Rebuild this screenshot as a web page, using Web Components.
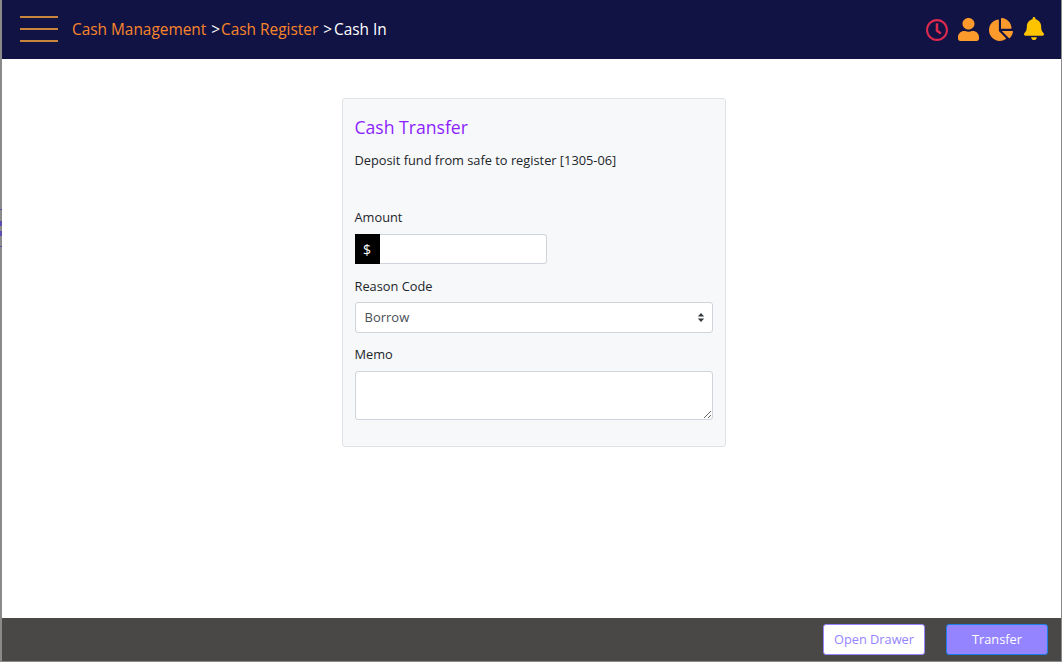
<!DOCTYPE html>
<html lang="en"><head><meta charset="utf-8"><title>Cash In</title>
<style>
html,body{margin:0;height:100%;background:#fff;overflow:hidden}
body{font-family:"Open Sans","Noto Sans",sans-serif;color:#212529}
</style></head>
<body>
<template id="t-app"><style>
:host{display:flex;flex-direction:column;width:1062px;height:662px;box-sizing:border-box;border-left:2px solid #8a8a8a;border-right:1px solid #8a8a8a;border-bottom:1px solid #8a8a8a;position:relative}
main{flex:1;display:flex;justify-content:center;align-items:flex-start;padding:39px 0 0 4px;min-height:0}
.ticks{position:absolute;left:-2px;top:209px;width:2px;height:38px;background:linear-gradient(#5a4fb0 0 1px,transparent 1px 12px,#5a4fb0 12px 17px,transparent 17px 22px,#5a4fb0 22px 27px,transparent 27px 37px,#5a4fb0 37px)}
</style><slot name="top"></slot><main><slot></slot></main><slot name="bottom"></slot><div class="ticks"></div></template>

<template id="t-header"><style>
:host{display:flex;align-items:center;height:59px;background:#111345;box-sizing:border-box;padding:0 17px 0 18px;flex:none}
.burger{display:flex;flex-direction:column;justify-content:space-between;width:38px;height:26px;margin-right:14px;margin-top:-1px}
.burger i{display:block;height:2px;background:#c9853c}
nav{flex:1;font-size:15.4px;color:#fff;white-space:pre;margin-top:-1px}
a{color:#f9852a}
.sep{margin:0 1px 0 5px}
.sep.b{margin:0 2px 0 5px}
.icons{display:flex;align-items:center;gap:10px}
svg{display:block;flex:none}
.clock{margin-top:1px}
.bell{margin:0 0 2px 1px}
</style><div class="burger"><i></i><i></i><i></i></div>
<nav><a>Cash Management</a><span class="sep">&gt;</span><a>Cash Register</a><span class="sep b">&gt;</span>Cash In</nav>
<div class="icons">
<svg class="clock" width="22" height="22" viewBox="8 8 496 496" fill="#dc2a4e"><path d="M256 8C119 8 8 119 8 256s111 248 248 248 248-111 248-248S393 8 256 8zm0 448c-110.5 0-200-89.5-200-200S145.5 56 256 56s200 89.5 200 200-89.5 200-200 200zm61.8-104.4l-84.9-61.7c-3.1-2.3-4.9-5.9-4.9-9.7V116c0-6.6 5.4-12 12-12h32c6.6 0 12 5.4 12 12v141.7l66.8 48.6c5.4 3.9 6.5 11.4 2.6 16.8L334.6 349c-3.9 5.3-11.4 6.5-16.8 2.6z"/></svg>
<svg width="21" height="23" viewBox="0 0 448 512" preserveAspectRatio="none" fill="#fd9a2c"><path d="M224 256c70.7 0 128-57.3 128-128S294.7 0 224 0 96 57.3 96 128s57.3 128 128 128zm89.6 32h-16.7c-22.2 10.2-46.9 16-72.9 16s-50.6-5.8-72.9-16h-16.7C60.2 288 0 348.2 0 422.4V464c0 26.5 21.5 48 48 48h352c26.5 0 48-21.5 48-48v-41.6c0-74.2-60.2-134.4-134.4-134.4z"/></svg>
<svg width="24" height="23" viewBox="0 0 544 512" preserveAspectRatio="none" fill="#fd9a2c"><path d="M527.79 288H290.5l158.03 158.03c6.04 6.04 15.98 6.53 22.19 .68 38.7-36.46 65.32-85.61 73.13-140.86 1.34-9.46-6.51-17.85-16.06-17.85zm-15.83-64.8C503.72 103.74 408.26 8.28 288.8 .04 279.68-.59 272 7.1 272 16.24V240h223.77c9.14 0 16.82-7.68 16.19-16.8zM224 288V50.71c0-9.55-8.39-17.4-17.84-16.06C86.99 51.49-4.1 155.6 .14 280.37 4.5 408.51 114.83 513.59 243.03 511.98c50.4-.63 96.97-16.87 135.26-44.03 7.9-5.6 8.42-17.23 1.57-24.08L224 288z"/></svg>
<svg class="bell" width="20" height="23" viewBox="0 0 448 512" preserveAspectRatio="none" fill="#ffc400"><path d="M224 512c35.32 0 63.97-28.65 63.97-64H160.03c0 35.35 28.65 64 63.97 64zm215.39-149.71c-19.32-20.76-55.47-51.99-55.47-154.29 0-77.7-54.48-139.9-127.94-155.16V32c0-17.67-14.32-32-31.98-32s-31.98 14.33-31.98 32v20.84C118.56 68.1 64.08 130.3 64.08 208c0 102.3-36.15 133.53-55.47 154.29-6 6.45-8.66 14.16-8.61 21.71.11 16.4 12.98 32 32.1 32h383.8c19.12 0 32-15.6 32.1-32 .05-7.55-2.61-15.27-8.61-21.71z"/></svg>
</div></template>

<template id="t-card"><style>
:host{display:block;width:384px;height:349px;box-sizing:border-box;background:#f7f8fa;border:1px solid #dfe2e6;border-radius:3px;padding:12px}
h2{margin:5px 0 0;font-size:17.6px;font-weight:400;line-height:22px;color:#8c1fff}
p{margin:12px 0 0;font-size:12.8px;line-height:20px}
.body{margin-top:38px;display:flex;flex-direction:column}
</style><h2><slot name="title"></slot></h2><p><slot name="sub"></slot></p><div class="body"><slot></slot></div></template>

<template id="t-field"><style>
:host{display:block;margin-bottom:12px}
label{display:block;font-size:12.8px;line-height:18px;margin-bottom:8px;color:#212529}
:host([nudge]) label{padding-top:1px;margin-bottom:7px}
</style><label><slot name="label"></slot></label><slot></slot></template>

<template id="t-money"><style>
:host{display:flex;width:192px;height:30px}
span{width:25px;background:#000;color:#fff;font-size:14px;display:flex;align-items:center;justify-content:center;flex:none}
input{flex:1;min-width:0;box-sizing:border-box;height:30px;border:1px solid #ced4da;border-left:0;border-radius:0 3px 3px 0;background:#fff;margin:0;padding:0 8px;outline:0}
</style><span>$</span><input type="text" aria-label="Amount"></template>

<template id="t-select"><style>
:host{display:block;position:relative;height:31px}
select{appearance:none;-webkit-appearance:none;width:100%;height:31px;box-sizing:border-box;border:1px solid #ced4da;border-radius:3px;background:#fff;padding:0 24px 2px 9px;font:13px "Open Sans","Noto Sans",sans-serif;color:#495057;outline:0;margin:0;display:block}
svg{position:absolute;right:8px;top:10px;pointer-events:none}
</style><select aria-label="Reason Code"><option>Borrow</option></select><svg width="8" height="11" viewBox="0 0 8 11" fill="#343a40"><path d="M4 1L7.2 4.6H.8Z"/><path d="M4 10L.8 6.4H7.2Z"/></svg></template>

<template id="t-memo"><style>
:host{display:block;height:49px}
textarea{display:block;width:100%;height:49px;box-sizing:border-box;border:1px solid #ced4da;border-radius:3px;background:#fff;margin:0;padding:6px 9px;outline:0;resize:vertical}
</style><textarea aria-label="Memo"></textarea></template>

<template id="t-footer"><style>
:host{display:flex;justify-content:flex-end;align-items:center;gap:21px;height:43px;flex:none;background:#494846;box-sizing:border-box;padding:0 13px 0 0}
</style><slot></slot></template>

<template id="t-btn"><style>
:host{display:block}
button{display:block;height:31px;box-sizing:border-box;border-radius:3px;font:12.8px "Open Sans","Noto Sans",sans-serif;padding:0 0 2px;margin:0;cursor:pointer;width:102px;border:1px solid #9584ff;background:#fff;color:#9584ff}
:host([primary]) button{background:#9584ff;color:#fff;border:1px solid #1a7de8}
</style><button><slot></slot></button></template>

<cash-app>
  <cash-header slot="top"></cash-header>
  <cash-card>
    <span slot="title">Cash Transfer</span>
    <span slot="sub">Deposit fund from safe to register [1305-06]</span>
    <cash-field><span slot="label">Amount</span><cash-money></cash-money></cash-field>
    <cash-field nudge><span slot="label">Reason Code</span><cash-select></cash-select></cash-field>
    <cash-field><span slot="label">Memo</span><cash-memo></cash-memo></cash-field>
  </cash-card>
  <cash-footer slot="bottom"><cash-btn>Open Drawer</cash-btn><cash-btn primary>Transfer</cash-btn></cash-footer>
</cash-app>
<script>
[['cash-app','t-app'],['cash-header','t-header'],['cash-card','t-card'],['cash-field','t-field'],['cash-money','t-money'],['cash-select','t-select'],['cash-memo','t-memo'],['cash-footer','t-footer'],['cash-btn','t-btn']].forEach(([n,t])=>{
  customElements.define(n,class extends HTMLElement{constructor(){super();this.attachShadow({mode:'open'}).appendChild(document.getElementById(t).content.cloneNode(true));}});
});
</script>
</body></html>
